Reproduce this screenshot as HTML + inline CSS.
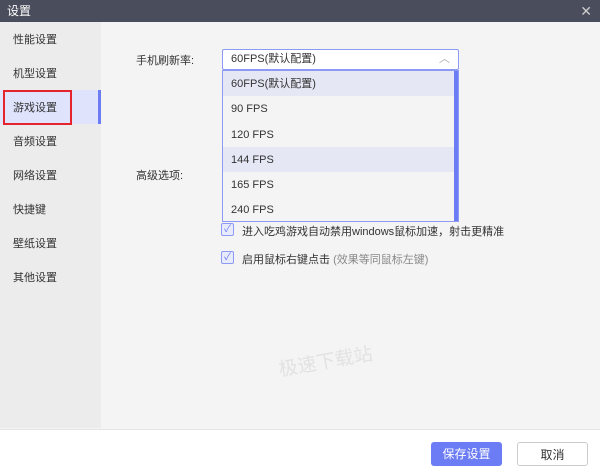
<!DOCTYPE html>
<html><head><meta charset="utf-8"><style>
*{margin:0;padding:0;box-sizing:border-box}
body{width:600px;height:475px;overflow:hidden;font-family:"Liberation Sans","Noto Sans CJK SC",sans-serif;font-size:11px;color:#333;background:#f4f4f4;position:relative}
.title{position:absolute;left:0;top:0;width:600px;height:22px;background:#4a4d5b;color:#fff;font-size:12px;line-height:22px;padding-left:7px}
.close{position:absolute;right:8px;top:0;color:#ccc;font-size:14px}
.side{position:absolute;left:0;top:22px;width:101px;height:406px;background:#ececec}
.side div{height:34px;line-height:36px;padding-left:13px;font-size:11px}
.side .act{background:#dfe3fb;border-right:3px solid #6b7cf5}
.red{position:absolute;left:3px;top:90px;width:69px;height:35px;border:2px solid #e5232d}
.abs{position:absolute}
.sel{left:222px;top:49px;width:237px;height:21px;border:1px solid #8c9af5;background:#fff;border-radius:2px;padding-left:8px;line-height:19px}
.dd{left:222px;top:70px;width:237px;height:152px;border:1px solid #8c9af5;background:#f4f4f4}
.dd div{height:25.3px;line-height:27px;padding-left:8px}
.dd .h{background:#e5e7f5}
.sb{left:454px;top:71px;width:4px;height:150px;background:#6b7cf5}
.cb{width:13px;height:13px;border:1px solid #8c9af5;border-radius:2px;background:#e8ebfb;color:#6b7cf5;font-size:10px;line-height:11px;text-align:center}
.foot{left:0;top:429px;width:600px;height:46px;background:#fff;border-top:1px solid #e4e4e4}
.btn{top:442px;width:71px;height:24px;border-radius:3px;text-align:center;line-height:24px;font-size:12px}
</style></head><body>
<div class="title">设置<span class="close">✕</span></div>
<div class="side">
<div>性能设置</div><div>机型设置</div><div class="act">游戏设置</div><div>音频设置</div><div>网络设置</div><div>快捷键</div><div>壁纸设置</div><div>其他设置</div>
</div>
<div class="red"></div>
<div class="abs" style="left:136px;top:52px">手机刷新率:</div>
<div class="abs sel">60FPS(默认配置)<span style="position:absolute;right:8px;top:0;color:#aaa">︿</span></div>
<div class="abs dd"><div class="h">60FPS(默认配置)</div><div>90 FPS</div><div>120 FPS</div><div class="h">144 FPS</div><div>165 FPS</div><div>240 FPS</div></div>
<div class="abs sb"></div>
<div class="abs" style="left:136px;top:167px">高级选项:</div>
<div class="abs cb" style="left:221px;top:223px">✓</div>
<div class="abs" style="left:242px;top:223px">进入吃鸡游戏自动禁用windows鼠标加速，射击更精准</div>
<div class="abs cb" style="left:221px;top:251px">✓</div>
<div class="abs" style="left:242px;top:251px">启用鼠标右键点击 <span style="color:#888">(效果等同鼠标左键)</span></div>
<div class="abs" style="left:278px;top:347px;font-size:19px;color:#e2e2e2;transform:rotate(-10deg)">极速下载站</div>
<div class="abs foot"></div>
<div class="abs btn" style="left:431px;background:#6b7cf5;color:#fff">保存设置</div>
<div class="abs btn" style="left:517px;background:#fff;border:1px solid #ccc;color:#333">取消</div>
</body></html>
